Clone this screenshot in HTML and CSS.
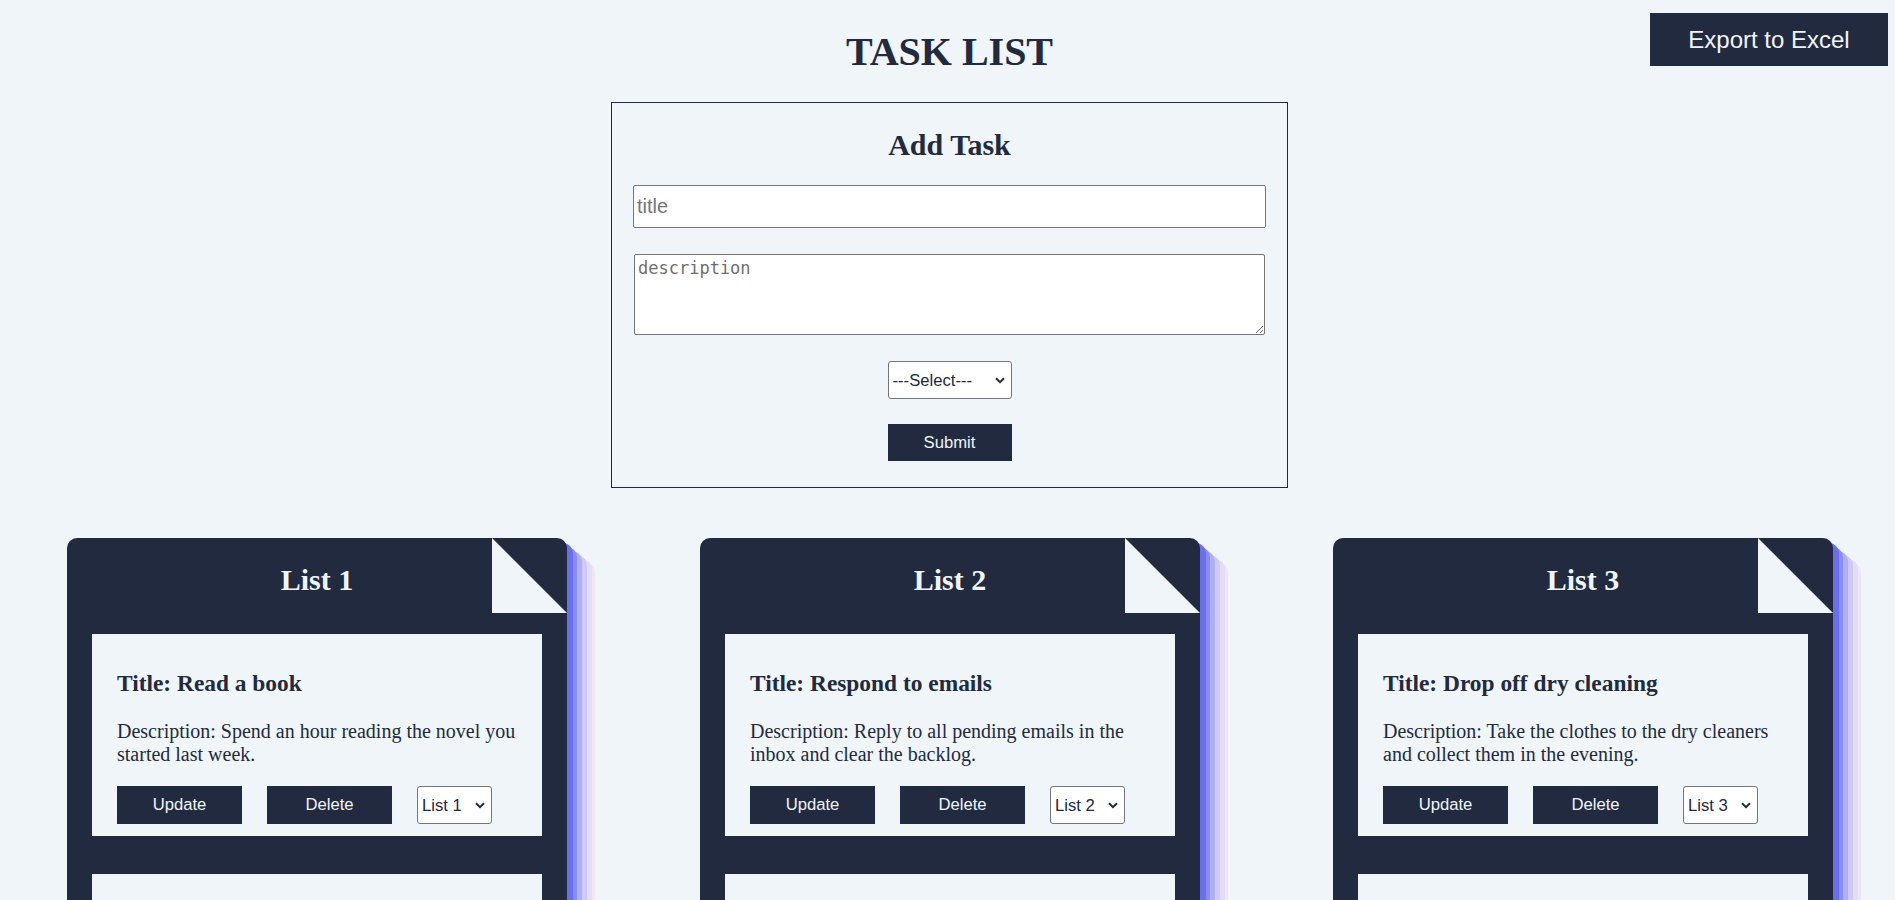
FILE: index.html
```html
<!DOCTYPE html>
<html lang="en">
<head>
<meta charset="utf-8">
<title>Task List</title>
<link rel="stylesheet" href="styles.css">
</head>
<body>
<button class="export-btn" type="button">Export to Excel</button>
<h1 class="page-title">TASK LIST</h1>

<form class="add-form">
  <h2 class="form-title">Add Task</h2>
  <input class="title-input" type="text" placeholder="title">
  <textarea class="desc-input" placeholder="description"></textarea>
  <select class="list-select select">
    <option>---Select---</option>
    <option>List 1</option>
    <option>List 2</option>
    <option>List 3</option>
  </select>
  <button class="btn submit-btn" type="button">Submit</button>
</form>

<main class="lists">
  <section class="list-card">
    <span class="fold"></span>
    <h2 class="list-title">List 1</h2>
    <div class="task">
      <h3 class="task-title">Title: Read a book</h3>
      <p class="task-desc">Description: Spend an hour reading the novel you started last week.</p>
      <div class="task-actions">
        <button class="btn" type="button">Update</button>
        <button class="btn" type="button">Delete</button>
        <select class="move-select select"><option>List 1</option><option>List 2</option><option>List 3</option></select>
      </div>
    </div>
    <div class="task">
      <h3 class="task-title">Title: Go for a run</h3>
      <p class="task-desc">Description: Run five kilometres around the park before breakfast.</p>
      <div class="task-actions">
        <button class="btn" type="button">Update</button>
        <button class="btn" type="button">Delete</button>
        <select class="move-select select"><option>List 1</option><option>List 2</option><option>List 3</option></select>
      </div>
    </div>
  </section>

  <section class="list-card">
    <span class="fold"></span>
    <h2 class="list-title">List 2</h2>
    <div class="task">
      <h3 class="task-title">Title: Respond to emails</h3>
      <p class="task-desc">Description: Reply to all pending emails in the inbox and clear the backlog.</p>
      <div class="task-actions">
        <button class="btn" type="button">Update</button>
        <button class="btn" type="button">Delete</button>
        <select class="move-select select"><option>List 2</option><option>List 1</option><option>List 3</option></select>
      </div>
    </div>
    <div class="task">
      <h3 class="task-title">Title: Prepare the report</h3>
      <p class="task-desc">Description: Finish the quarterly report and share it with the team.</p>
      <div class="task-actions">
        <button class="btn" type="button">Update</button>
        <button class="btn" type="button">Delete</button>
        <select class="move-select select"><option>List 2</option><option>List 1</option><option>List 3</option></select>
      </div>
    </div>
  </section>

  <section class="list-card">
    <span class="fold"></span>
    <h2 class="list-title">List 3</h2>
    <div class="task">
      <h3 class="task-title">Title: Drop off dry cleaning</h3>
      <p class="task-desc">Description: Take the clothes to the dry cleaners and collect them in the evening.</p>
      <div class="task-actions">
        <button class="btn" type="button">Update</button>
        <button class="btn" type="button">Delete</button>
        <select class="move-select select"><option>List 3</option><option>List 1</option><option>List 2</option></select>
      </div>
    </div>
    <div class="task">
      <h3 class="task-title">Title: Buy groceries</h3>
      <p class="task-desc">Description: Pick up vegetables, bread and milk from the store.</p>
      <div class="task-actions">
        <button class="btn" type="button">Update</button>
        <button class="btn" type="button">Delete</button>
        <select class="move-select select"><option>List 3</option><option>List 1</option><option>List 2</option></select>
      </div>
    </div>
  </section>
</main>
</body>
</html>
```

FILE: styles.css
```css
html, body {
  margin: 0;
  padding: 0;
}

body {
  background: #f0f5f9;
  color: #222a40;
  font-family: "Liberation Serif", "Times New Roman", serif;
  position: relative;
  overflow-x: hidden;
  padding-left: 4px;
}

.export-btn {
  position: absolute;
  top: 13px;
  right: 7px;
  width: 238px;
  height: 53px;
  border: none;
  background: #222a40;
  color: #f0f5f9;
  font-family: "Liberation Sans", Arial, sans-serif;
  font-size: 24px;
  padding: 0;
}

.page-title {
  font-size: 40px;
  line-height: 46px;
  font-weight: bold;
  text-align: center;
  margin: 29px 0 27px;
}

.add-form {
  width: 677px;
  box-sizing: border-box;
  margin: 0 auto;
  border: 1px solid #222a40;
  padding: 0 21px 26px;
  display: flex;
  flex-direction: column;
  align-items: center;
}

.form-title {
  font-size: 30px;
  line-height: 34px;
  margin: 25px 0 23px;
}

.title-input {
  box-sizing: border-box;
  width: 100%;
  height: 43px;
  border: 1px solid #767676;
  border-radius: 2px;
  background: #fff;
  padding: 0 3px;
  font-family: "Liberation Sans", Arial, sans-serif;
  font-size: 20px;
  color: #222a40;
}

.title-input::placeholder {
  color: #757575;
}

.desc-input {
  box-sizing: border-box;
  width: calc(100% - 2px);
  height: 81px;
  margin-top: 26px;
  border: 1px solid #767676;
  border-radius: 2px;
  background: #fff;
  padding: 3px 3px;
  font-family: "DejaVu Sans Mono", "Liberation Mono", monospace;
  font-size: 17px;
  resize: vertical;
}

.desc-input::placeholder {
  color: #6f6f6f;
}

.select {
  -webkit-appearance: none;
  appearance: none;
  box-sizing: border-box;
  border: 1px solid #767676;
  border-radius: 3px;
  background-color: #fff;
  background-image: url("data:image/svg+xml,%3Csvg xmlns='http://www.w3.org/2000/svg' width='10' height='7' viewBox='0 0 10 7'%3E%3Cpath d='M1 1.2 L5 5.2 L9 1.2' fill='none' stroke='%23222a40' stroke-width='2'/%3E%3C/svg%3E");
  background-repeat: no-repeat;
  background-position: right 6px center;
  background-size: 10px 7px;
  color: #222a40;
  font-family: "Liberation Sans", Arial, sans-serif;
  font-size: 16.67px;
  padding: 0 20px 0 4px;
}

.list-select {
  width: 124px;
  height: 38px;
  margin-top: 26px;
}

.move-select {
  width: 75px;
  height: 37.5px;
}

.btn {
  box-sizing: border-box;
  width: 125px;
  height: 37.5px;
  border: none;
  background: #222a40;
  color: #f0f5f9;
  font-family: "Liberation Sans", Arial, sans-serif;
  font-size: 16.67px;
  padding: 0;
}

.submit-btn {
  width: 124px;
  height: 37px;
  margin-top: 25px;
}

.lists {
  display: flex;
  align-items: flex-start;
  gap: 133px;
  padding-left: 63px;
  margin-top: 50px;
}

.list-card {
  position: relative;
  width: 500px;
  flex: none;
  background: #222a40;
  border-radius: 10px 10px 0 0;
  display: flow-root;
  padding-bottom: 40px;
  box-shadow:
    6px 5px 0 #6a6ef0,
    10px 9px 0 #8a8df1,
    15px 13px 0 #aeaef0,
    20px 17px 0 #cfcaf1,
    25px 21px 0 #e4dcf2,
    28px 24px 0 #ede6f3;
}

.fold {
  position: absolute;
  top: 0;
  right: 0;
  width: 75px;
  height: 75px;
  background: #f0f5f9;
  clip-path: polygon(0 0, 0 100%, 100% 100%);
}

.list-title {
  color: #f0f5f9;
  font-size: 30px;
  line-height: 34px;
  text-align: center;
  margin: 25px 0 25px;
}

.task {
  background: #f0f5f9;
  margin: 37px 25px 0 25px;
  padding: 12.5px 25px;
  display: flow-root;
}

.task + .task {
  margin-top: 37.5px;
}

.task-title {
  font-size: 23.4px;
  line-height: 27px;
  margin: 23.4px 0;
}

.task-desc {
  font-size: 20px;
  line-height: 23px;
  margin: 20px 0;
}

.task-actions {
  display: flex;
  align-items: center;
  gap: 25px;
}
```
